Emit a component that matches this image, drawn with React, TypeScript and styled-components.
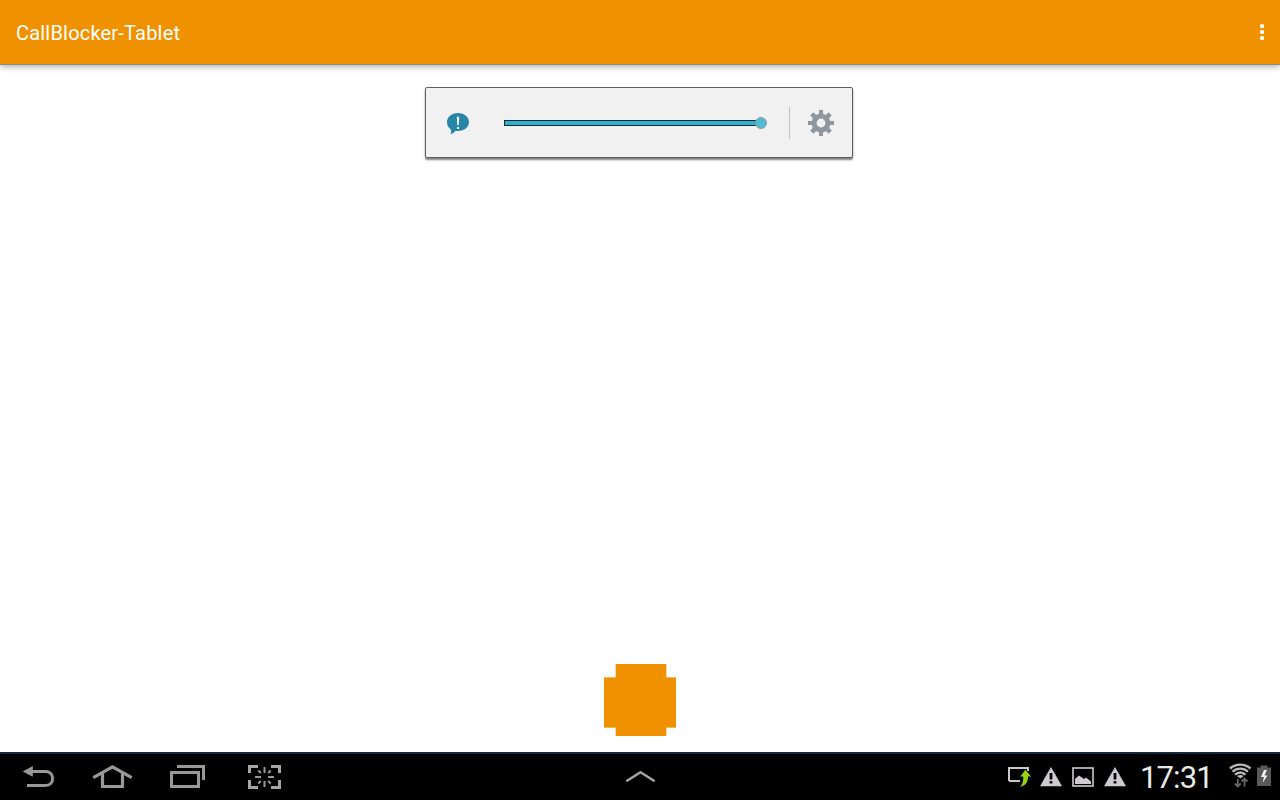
import React from 'react';
import styled, { createGlobalStyle } from 'styled-components';

const GlobalStyle = createGlobalStyle`
  body { margin: 0; background: #fff; font-family: Roboto, "Noto Sans", sans-serif; }
`;

const Screen = styled.div`
  width: 1280px;
  height: 800px;
  display: flex;
  flex-direction: column;
  overflow: hidden;
  background: #fff;
`;

const AppBar = styled.header`
  height: 64px;
  flex: none;
  padding: 0 16px;
  display: flex;
  align-items: center;
  justify-content: space-between;
  background: #f09100;
  border-bottom: 1px solid #8d8b88;
  box-shadow: 0 2px 6px rgba(0, 0, 0, 0.3);
`;

const Title = styled.h1`
  margin: 0;
  padding-top: 2px;
  color: #fff;
  font-size: 20px;
  line-height: 24px;
  font-weight: 400;
  letter-spacing: 0.2px;
`;

const Overflow = styled.button`
  border: 0;
  padding: 0;
  background: none;
  display: flex;
  flex-direction: column;
  gap: 2px;
`;

const Dot = styled.span`
  width: 4px;
  height: 4px;
  border-radius: 1.5px;
  background: #fff;
`;

const Content = styled.main`
  flex: 1;
  display: flex;
  flex-direction: column;
  align-items: center;
  justify-content: space-between;
  padding: 22px 2px 16px 0;
`;

const VolumePanel = styled.section`
  width: 428px;
  height: 71px;
  box-sizing: border-box;
  display: flex;
  align-items: center;
  padding: 0 18px 0 21px;
  background: #f1f1f1;
  border: 1px solid #5f5f61;
  border-radius: 2px;
  box-shadow: 0 2px 2px rgba(0, 0, 0, 0.5);
`;

const Slider = styled.div`
  display: flex;
  align-items: center;
  margin-left: 35px;
`;

const Track = styled.div`
  width: 253px;
  height: 4px;
  border: 1px solid #16292e;
  background: #31afcf;
`;

const Thumb = styled.div`
  width: 10px;
  height: 10px;
  margin-left: -4px;
  border: 1px solid #8aa0a2;
  border-radius: 50%;
  background: #52b9d3;
`;

const Divider = styled.div`
  width: 1px;
  height: 32px;
  flex: none;
  margin: 0 18px 0 22px;
  background: #c2c2c2;
`;

const ButtonRow = styled.div`
  padding-left: 2px;
`;

const Glyph = styled.svg`
  display: block;
  flex: none;
`;

const SystemBar = styled.footer`
  height: 46px;
  flex: none;
  display: grid;
  grid-template-columns: 1fr auto 1fr;
  background: #000;
  border-top: 2px solid #102c3b;
`;

const NavKeys = styled.nav`
  display: flex;
  padding: 8px 0 0 20px;
  gap: 33px;
`;

const Handle = styled.div`
  padding-top: 15px;
`;

const Status = styled.div`
  display: flex;
  justify-content: flex-end;
  padding: 8px 8px 0 0;
`;

const Notifications = styled.div`
  display: flex;
  gap: 8px;
  padding-top: 2px;
`;

const Clock = styled.time`
  width: 74px;
  margin: -2px 14px 0 13px;
  color: #e9e9e9;
  font-size: 31px;
  line-height: 36px;
  letter-spacing: -0.9px;
  white-space: nowrap;
`;

const Warning = () => (
  <Glyph width="24" height="24" viewBox="1039 764 24 24">
    <path d="M1051 767L1062 786.3H1040Z" fill="#cfcbcf" />
    <path d="M1051 773v6.5M1051 781v2.6" stroke="#080808" strokeWidth="2.8" />
  </Glyph>
);

export default function App() {
  return (
    <Screen>
      <GlobalStyle />
      <AppBar>
        <Title>CallBlocker-Tablet</Title>
        <Overflow aria-label="More options"><Dot /><Dot /><Dot /></Overflow>
      </AppBar>
      <Content>
        <VolumePanel>
          <Glyph width="22" height="25" viewBox="447 110 22 25">
            <path d="M458 113c6.300 0 11 4 11 9s-4.700 9-11 9c-1 0-1.500 0-2.500-.2c-1.200 1.700-3 3-5.300 3.500c1-1.400 1.200-3 .7-4.900c-2.500-1.700-3.900-4.400-3.900-7.400c0-5 4.700-9 11-9z" fill="#2785a8" />
            <path d="M456.800 116.800h2.400l-.5 8.400h-1.400zM457 127h2v2h-2z" fill="#fff" />
          </Glyph>
          <Slider><Track /><Thumb /></Slider>
          <Divider />
          <Glyph width="26" height="27" viewBox="-13 -14 26 27">
            {[0, 45, 90, 135].map(a => (
              <path key={a} d="M0-13V-7M0 7V13" stroke="#8e979d" strokeWidth={a % 90 ? 4.600 : 4} transform={`rotate(${a})`} />
            ))}
            <circle r="6.900" fill="none" stroke="#8e979d" strokeWidth="5" />
          </Glyph>
        </VolumePanel>
        <ButtonRow>
          <Glyph width="72" height="72" viewBox="0 0 72 72">
            <path d="M11 0H63V13H72V64H63V72H11V64H0V13H11Z" fill="#f8d9a5" />
            <path d="M12 0H62V13.500H72V63.500H62V72H12V63.500H0V13.500H12Z" fill="#f09100" />
          </Glyph>
        </ButtonRow>
      </Content>
      <SystemBar>
        <NavKeys>
          <Glyph width="38" height="30" viewBox="20 762 38 30">
            <path d="M22.700 771.400L32.800 766V776.800Z" fill="#989898" />
            <path d="M32 771.500H45.500C50 771.500 52.600 774.500 52.600 778.500S50 785.500 45.500 785.500H27" fill="none" stroke="#989898" strokeWidth="3" />
          </Glyph>
          <Glyph width="43" height="30" viewBox="91 762 43 30">
            <path d="M93.300 777.700L112.500 766.800L131.700 777.700M102.500 773V786.500H122.500V773" fill="none" stroke="#989898" strokeWidth="3.200" />
          </Glyph>
          <Glyph width="40" height="30" viewBox="167 762 40 30">
            <path d="M177 766.500H203.500V780M171.500 772.500H198.500V786.500H171.500Z" fill="none" stroke="#989898" strokeWidth="3" />
          </Glyph>
          <Glyph width="42" height="30" viewBox="240 762 42 30">
            <path d="M249.500 773V766.500H258M271 766.500H279.500V773M249.500 780V787.500H258M271 787.500H279.500V780" fill="none" stroke="#a5a5a5" strokeWidth="3" />
            <path d="M255 777H261M268 777H274M264.500 767V773M264.500 781V787M258.300 770.500L260.800 773M270.700 770.500L268.200 773M258.300 783.500L260.800 781M270.700 783.500L268.200 781" stroke="#999" strokeWidth="2" />
          </Glyph>
        </NavKeys>
        <Handle>
          <Glyph width="30" height="14" viewBox="625 769 30 14">
            <path d="M626.300 781.300L640.500 772.300L654.700 781.300" fill="none" stroke="#a4a4a4" strokeWidth="2.500" />
          </Glyph>
        </Handle>
        <Status>
          <Notifications>
            <Glyph width="24" height="24" viewBox="1007 764 24 24">
              <path d="M1009 781V768H1028V771M1009 781H1020" fill="none" stroke="#c9c7c9" strokeWidth="2" />
              <path d="M1025.500 769.800L1031 776.500H1028C1028 782 1026 785.500 1020 787C1022.800 784 1023.500 781 1023.200 776.500H1020.300Z" fill="#95d313" />
            </Glyph>
            <Warning />
            <Glyph width="24" height="24" viewBox="1071 764 24 24">
              <rect x="1073" y="768" width="20" height="18" fill="none" stroke="#cfcbcf" strokeWidth="1.600" />
              <path d="M1075 784V779L1079 775.500L1084 779L1086 777.500L1091 781.500V784Z" fill="#cfcbcf" />
            </Glyph>
            <Warning />
          </Notifications>
          <Clock>17:31</Clock>
          <Glyph width="24" height="26" viewBox="1228 762 24 26">
            <path d="M1230 768.500C1236 763.300 1244.500 763.300 1250.500 768.500M1232.500 771.700C1237 767.600 1243.500 767.600 1248 771.700M1235 774.700C1238.300 771.800 1242.200 771.800 1245.500 774.700" fill="none" stroke="#b8b8b8" strokeWidth="2.400" />
            <path d="M1240.300 778.500L1236.800 776Q1240.300 773.800 1243.800 776Z" fill="#b8b8b8" />
            <path d="M1237.800 779V786M1234.800 783.500L1237.800 786.500L1240.800 783.500M1244.500 786.500V779M1241.500 781.500L1244.500 778.500L1247.500 781.500" fill="none" stroke="#666" strokeWidth="1.800" />
          </Glyph>
          <Glyph width="20" height="26" viewBox="1252 762 20 26">
            <path d="M1257 767.500H1260.500V765.500H1267.500V767.500H1271V786H1257Z" fill="#595959" />
            <path d="M1264 770L1261 777H1264L1262.500 783L1267.500 775.500H1264.500L1267 770Z" fill="#f2f2f2" />
          </Glyph>
        </Status>
      </SystemBar>
    </Screen>
  );
}
